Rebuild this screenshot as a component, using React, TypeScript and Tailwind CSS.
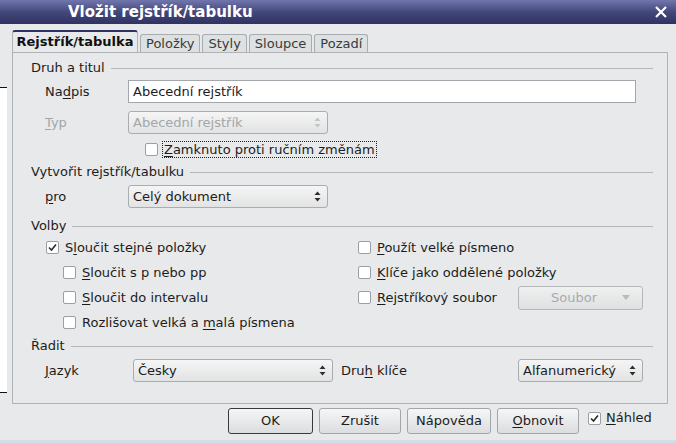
import React from 'react';

const font = { fontFamily: '"DejaVu Sans", Verdana, sans-serif' };

function U({ children }: { children: React.ReactNode }) {
  return <span className="underline underline-offset-[2px]">{children}</span>;
}

function Checkbox({ checked = false }: { checked?: boolean }) {
  return (
    <span className="flex h-[13px] w-[13px] shrink-0 items-center justify-center rounded-[2px] border border-[#9b9ea2] bg-white">
      {checked && (
        <svg width="11" height="11" viewBox="0 0 11 11">
          <path d="M2 5.5 L4.5 8 L9 2.5" fill="none" stroke="#2b2b2b" strokeWidth="1.6" />
        </svg>
      )}
    </span>
  );
}

function Spinner({ disabled = false }: { disabled?: boolean }) {
  const c = disabled ? '#c2c4c6' : '#2e2e2e';
  return (
    <svg width="7" height="11" viewBox="0 0 7 11">
      <path d="M0.5 4 L3.5 0.5 L6.5 4 Z" fill={c} />
      <path d="M0.5 7 L3.5 10.5 L6.5 7 Z" fill={c} />
    </svg>
  );
}

function Select({ value, width, disabled = false }: { value: string; width: string; disabled?: boolean }) {
  return (
    <div
      className={`flex h-[23px] ${width} items-center justify-between rounded-[3px] border border-[#a9acb0] bg-gradient-to-b from-[#f5f5f5] to-[#e2e3e4] pl-[4px] pr-[6px] ${disabled ? 'text-[#a4a6a8]' : 'text-[#1c1c1c]'}`}
    >
      <span>{value}</span>
      <Spinner disabled={disabled} />
    </div>
  );
}

function GroupHeader({ title, className = '' }: { title: string; className?: string }) {
  return (
    <div className={`flex h-[18px] items-center ${className}`}>
      <span className="ml-[18px] mr-[6px]">{title}</span>
      <div className="h-px flex-1 bg-[#b4b7ba]" />
    </div>
  );
}

function Option({ checked, indent, children }: { checked?: boolean; indent: string; children: React.ReactNode }) {
  return (
    <div className={`flex h-[25px] items-center gap-[6px] ${indent}`}>
      <Checkbox checked={checked} />
      <span>{children}</span>
    </div>
  );
}

function Btn({ children, def = false, w }: { children: React.ReactNode; def?: boolean; w: string }) {
  return (
    <div
      className={`flex h-[26px] ${w} items-center justify-center rounded-[3px] border bg-gradient-to-b from-[#f6f6f6] to-[#dcdddf] ${def ? 'border-[#3a3a3a]' : 'border-[#a2a5a9]'}`}
    >
      {children}
    </div>
  );
}

export default function App() {
  return (
    <div className="flex h-[443px] w-[676px] flex-col overflow-hidden bg-[#e8e9ea] text-[13px] text-[#1c1c1c]" style={font}>
      {/* Title bar */}
      <div className="flex h-[24px] items-center justify-between bg-gradient-to-b from-[#7176ae] via-[#444879] to-[#2f3262] pl-[68px] pr-[8px]">
        <span className="text-[15px] font-bold text-white">Vložit rejstřík/tabulku</span>
        <svg width="14" height="14" viewBox="0 0 14 14">
          <path d="M2 2 L12 12 M12 2 L2 12" stroke="#ffffff" strokeWidth="2.2" />
        </svg>
      </div>

      {/* Body */}
      <div className="flex flex-1 pt-[6px]">
        {/* preview strip */}
        <div className="mt-[57px] h-[306px] w-[7px] border-y border-[#111] bg-white" />

        <div className="ml-[5px] flex w-[656px] flex-col">
          {/* Tabs */}
          <div className="flex h-[22px] items-end gap-[2px]">
            <div className="flex h-[22px] w-[126px] items-center justify-center rounded-t-[3px] border-x border-t-2 border-x-[#b0b3b6] border-t-[#2f3260] bg-[#e8e9ea] font-bold text-[#111]">
              Rejstřík/tabulka
            </div>
            {['Položky', 'Styly', 'Sloupce', 'Pozadí'].map((t) => (
              <div
                key={t}
                className="flex h-[18px] items-center rounded-t-[3px] border-x border-t border-[#a8acb0] bg-[#dde1e1] px-[5px] text-[#3a3a3a]"
              >
                {t}
              </div>
            ))}
          </div>

          {/* Panel */}
          <div className="flex h-[352px] flex-col border border-[#b0b3b6] pr-[14px] pt-[6px]">
            <GroupHeader title="Druh a titul" />
            <div className="mt-[3px] flex h-[23px] items-center">
              <span className="ml-[32px] w-[83px]">
                Na<U>d</U>pis
              </span>
              <div className="flex h-[23px] w-[508px] items-center border border-[#a3a6aa] bg-white px-[4px]">Abecední rejstřík</div>
            </div>
            <div className="mt-[8px] flex h-[23px] items-center">
              <span className="ml-[32px] w-[83px] text-[#a4a6a8]">
                <U>T</U>yp
              </span>
              <Select value="Abecední rejstřík" width="w-[200px]" disabled />
            </div>
            <div className="mt-[6px] flex h-[18px] items-center gap-[4px] pl-[132px]">
              <Checkbox />
              <span className="border border-dotted border-[#222] px-[1px] leading-[15px]">
                <U>Z</U>amknuto proti ručním změnám
              </span>
            </div>

            <GroupHeader title="Vytvořit rejstřík/tabulku" className="mt-[5px]" />
            <div className="mt-[4px] flex h-[23px] items-center">
              <span className="ml-[32px] w-[83px]">
                <U>p</U>ro
              </span>
              <Select value="Celý dokument" width="w-[200px]" />
            </div>

            <GroupHeader title="Volby" className="mt-[9px]" />
            <div className="flex">
              <div className="flex w-[345px] flex-col">
                <Option checked indent="pl-[33px]">
                  S<U>l</U>oučit stejné položky
                </Option>
                <Option indent="pl-[50px]">
                  <U>S</U>loučit s p nebo pp
                </Option>
                <Option indent="pl-[50px]">
                  <U>S</U>loučit do intervalu
                </Option>
                <Option indent="pl-[50px]">
                  Rozlišovat velká a <U>m</U>alá písmena
                </Option>
              </div>
              <div className="flex flex-col">
                <Option indent="">
                  <U>P</U>oužít velké písmeno
                </Option>
                <Option indent="">
                  <U>K</U>líče jako oddělené položky
                </Option>
                <div className="flex h-[25px] items-center">
                  <div className="flex w-[160px] items-center gap-[6px]">
                    <Checkbox />
                    <span>
                      <U>R</U>ejstříkový soubor
                    </span>
                  </div>
                  <div className="flex h-[24px] w-[125px] items-center justify-between rounded-[3px] border border-[#b4b7ba] bg-gradient-to-b from-[#eff0f0] to-[#dfe0e1] pl-[32px] pr-[12px] text-[#a9abad]">
                    <span>Soubor</span>
                    <svg width="8" height="5" viewBox="0 0 8 5">
                      <path d="M0 0 L8 0 L4 5 Z" fill="#b8babc" />
                    </svg>
                  </div>
                </div>
              </div>
            </div>

            <GroupHeader title="Řadit" className="mt-[2px]" />
            <div className="mt-[4px] flex h-[23px] items-center">
              <span className="ml-[32px] w-[88px]">
                <U>J</U>azyk
              </span>
              <Select value="Česky" width="w-[200px]" />
              <span className="ml-[8px] w-[177px]">
                Dru<U>h</U> klíče
              </span>
              <Select value="Alfanumerický" width="w-[125px]" />
            </div>
          </div>
        </div>
      </div>

      {/* Footer buttons */}
      <div className="flex h-[36px] items-start gap-[6px] pl-[228px] pt-[4px]">
        <Btn def w="w-[85px]">OK</Btn>
        <Btn w="w-[82px]">Zrušit</Btn>
        <Btn w="w-[84px]">Nápověda</Btn>
        <Btn w="w-[82px]">
          <span>
            <U>O</U>bnovit
          </span>
        </Btn>
        <div className="ml-[3px] flex h-[20px] items-center gap-[5px]">
          <Checkbox checked />
          <span>
            <U>N</U>áhled
          </span>
        </div>
      </div>
      <div className="h-[3px] bg-[#d3dde6]" />
    </div>
  );
}
